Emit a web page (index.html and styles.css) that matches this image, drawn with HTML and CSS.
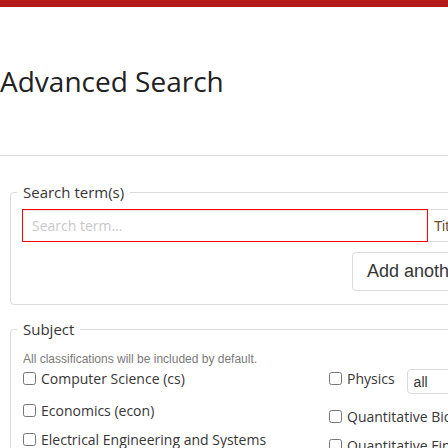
FILE: index.html
```html
<!DOCTYPE html>
<html lang="en">
<head>
<meta charset="utf-8">
<title>Advanced Search</title>
<link rel="stylesheet" href="styles.css">
</head>
<body>
<div class="topbar"></div>
<main class="page">
  <h1 class="title">Advanced Search</h1>
  <hr class="rule">
  <fieldset class="box box-terms">
    <legend class="box-legend">Search term(s)</legend>
    <div class="term-row">
      <input class="term-input" type="text" placeholder="Search term...">
      <select class="term-select"><option>Title</option></select>
    </div>
    <div class="term-actions">
      <button class="btn" type="button">Add another term +</button>
    </div>
  </fieldset>
  <fieldset class="box box-subject">
    <legend class="box-legend">Subject</legend>
    <p class="help">All classifications will be included by default.</p>
    <div class="subject-grid">
      <div class="subject-col">
        <label class="check"><input class="check-box" type="checkbox"><span>Computer Science (cs)</span></label>
        <label class="check"><input class="check-box" type="checkbox"><span>Economics (econ)</span></label>
        <label class="check"><input class="check-box" type="checkbox"><span>Electrical Engineering and Systems Science (eess)</span></label>
        <label class="check"><input class="check-box" type="checkbox"><span>Mathematics (math)</span></label>
      </div>
      <div class="subject-col">
        <div class="check-row">
          <label class="check"><input class="check-box" type="checkbox"><span>Physics</span></label>
          <select class="phys-select"><option>all</option></select>
        </div>
        <label class="check"><input class="check-box" type="checkbox"><span>Quantitative Biology (q-bio)</span></label>
        <label class="check"><input class="check-box" type="checkbox"><span>Quantitative Finance (q-fin)</span></label>
        <label class="check"><input class="check-box" type="checkbox"><span>Statistics (stat)</span></label>
      </div>
    </div>
  </fieldset>
</main>
</body>
</html>
```

FILE: styles.css
```css
html, body {
  margin: 0;
  padding: 0;
  overflow: hidden;
  background: #fff;
}

body {
  font-family: "Open Sans", "Liberation Sans", sans-serif;
  color: #363636;
}

.topbar {
  height: 7px;
  background: #b31b1b;
}

.page {
  width: 760px;
}

.title {
  margin: 55px 0 0;
  font-size: 28px;
  line-height: 38px;
  font-weight: 400;
  color: #222;
}

.rule {
  margin: 55px 0 0;
  border: 0;
  border-top: 1px solid #dbdbdb;
  height: 0;
}

.box {
  margin: 0 0 0 10px;
  padding: 0 11px 0 11px;
  border: 1px solid #dbdbdb;
  border-radius: 4px;
  width: 700px;
  box-sizing: border-box;
}

.box-terms {
  margin-top: 26px;
  padding-bottom: 13px;
}

.box-subject {
  margin-top: 14px;
  padding-bottom: 20px;
}

.box-legend {
  margin-left: -5px;
  padding: 0 6px;
  font-size: 15px;
  line-height: 20px;
  color: #363636;
}

.term-row {
  display: flex;
  margin-top: 7px;
}

.term-input {
  width: 406px;
  height: 33px;
  box-sizing: border-box;
  margin: 0;
  padding: 0 9px;
  border: 1px solid #f00;
  border-radius: 0;
  box-shadow: inset 0 1px 2px rgba(10, 10, 10, 0.1);
  font-family: "Open Sans", sans-serif;
  font-size: 14px;
  color: #363636;
  outline: none;
}

.term-input::placeholder {
  color: #c9c9c9;
}

.term-select {
  appearance: none;
  -webkit-appearance: none;
  width: 120px;
  height: 33px;
  margin: 0;
  padding: 0 6px;
  border: 1px solid #dbdbdb;
  border-left: 0;
  border-radius: 0;
  background: #fff;
  font-family: "Liberation Sans", Arial, sans-serif;
  font-size: 14px;
  color: #6b4a2e;
}

.term-actions {
  display: flex;
  margin-top: 10px;
  padding-left: 330px;
}

.btn {
  height: 39px;
  margin: 0;
  padding: 0 14px;
  border: 1px solid #dbdbdb;
  border-radius: 4px;
  background: #fff;
  font-family: "Liberation Sans", Arial, sans-serif;
  font-size: 18px;
  color: #363636;
  white-space: nowrap;
}

.help {
  margin: 12px 0 2px 1px;
  font-family: "Liberation Sans", Arial, sans-serif;
  font-size: 12px;
  line-height: 16px;
  color: #7a7a7a;
}

.subject-grid {
  display: grid;
  grid-template-columns: 306px 306px;
}

.subject-col {
  display: flex;
  flex-direction: column;
  align-items: flex-start;
  gap: 10px;
  padding-right: 14px;
}

.subject-col > :first-child {
  margin-bottom: 3px;
}

.check {
  display: flex;
  align-items: flex-start;
  font-size: 14px;
  line-height: 19px;
  color: #363636;
}

.check-box {
  flex: none;
  width: 13px;
  height: 13px;
  margin: 3px 5px 0 1px;
}

.check-row {
  display: flex;
  align-items: flex-start;
  gap: 12px;
}

.phys-select {
  appearance: none;
  -webkit-appearance: none;
  width: 120px;
  height: 25px;
  margin: 0;
  padding: 0 6px;
  border: 1px solid #dbdbdb;
  border-radius: 4px;
  background: #fff;
  font-family: "Liberation Sans", Arial, sans-serif;
  font-size: 14px;
  color: #363636;
}
```
